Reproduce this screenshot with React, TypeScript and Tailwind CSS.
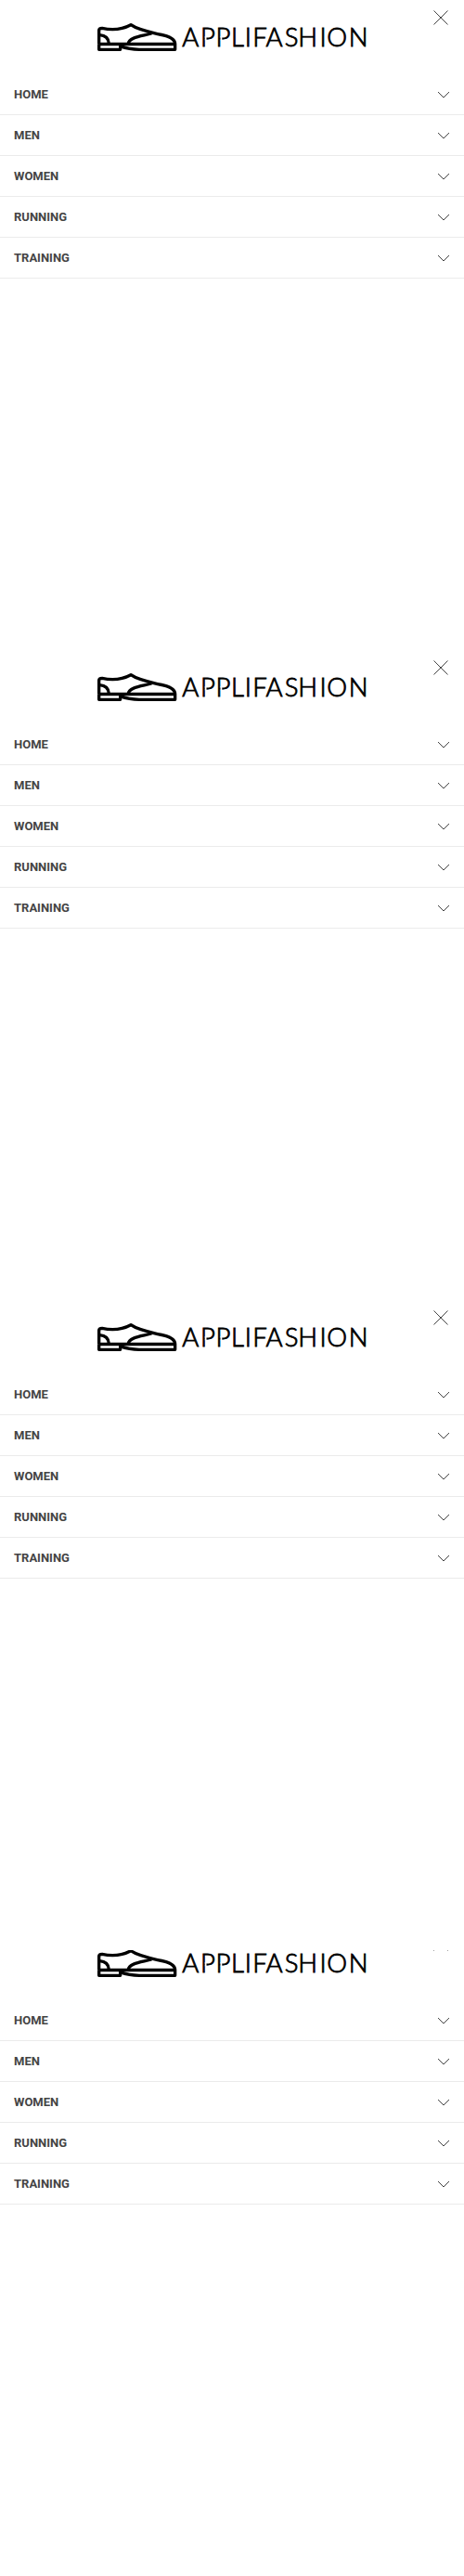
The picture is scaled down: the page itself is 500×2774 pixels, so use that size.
const items = ["HOME", "MEN", "WOMEN", "RUNNING", "TRAINING"];

function Logo() {
  return (
    <svg width="300" height="40" viewBox="100 20 300 40" className="block" role="img" aria-label="Applifashion">
      <g transform="scale(0.33333)" fill="none" stroke="#000" strokeWidth="10" strokeLinejoin="round">
        <path d="M320 142 V98 Q320 91 330 91 C362 98 392 97 423 80 C445 96 480 103 516 111 C548 117 566 126 566 142 V160 H450 C430 160 410 157 388 149" />
        <path d="M320 142.5 H566" />
        <path d="M320 142 V160 H389 V146" />
        <path d="M490 108 C466 116 416 118 415 141" />
        <path d="M322 113 C342 114 351 126 352 141" />
      </g>
      <text
        y="50"
        x="196.2 216 232.5 249 263.7 272.2 286.4 306.7 321.3 344.5 352.2 375.8"
        fill="#000"
        stroke="#000"
        strokeWidth="0.85"
        className="font-[Lato,sans-serif] text-[27.5px] font-light"
      >
        APPLIFASHION
      </text>
      <path d="M220.7 39.2h1.8v4h-1.8z M237.5 39.2h1.8v4h-1.8z" fill="#fff" />
    </svg>
  );
}

function Menu() {
  return (
    <div className="relative h-[700px] bg-white">
      <header className="flex h-20 justify-center pt-5">
        <Logo />
      </header>
      <button aria-label="Close" className="absolute top-[11px] right-[17px] block">
        <svg width="16" height="16" viewBox="0 0 16 16" stroke="#444" strokeWidth="1" fill="none">
          <path d="M0.5 0.5 L15.5 15.5 M15.5 0.5 L0.5 15.5" />
        </svg>
      </button>
      <ul>
        {items.map((item) => (
          <li
            key={item}
            className="flex h-11 items-center justify-between border-b border-[#ebebeb] px-[15px] font-[Roboto,sans-serif] text-[13px] font-bold text-[#444]"
          >
            <span>{item}</span>
            <svg width="14" height="8" viewBox="0 0 14 8" stroke="#444" strokeWidth="1" fill="none">
              <path d="M1 1 L7 7 L13 1" />
            </svg>
          </li>
        ))}
      </ul>
    </div>
  );
}

export default function App() {
  return (
    <main className="w-[500px] bg-white">
      <Menu />
      <Menu />
      <Menu />
      <div className="flex h-[674px] flex-col justify-end overflow-hidden">
        <div className="shrink-0">
          <Menu />
        </div>
      </div>
    </main>
  );
}
